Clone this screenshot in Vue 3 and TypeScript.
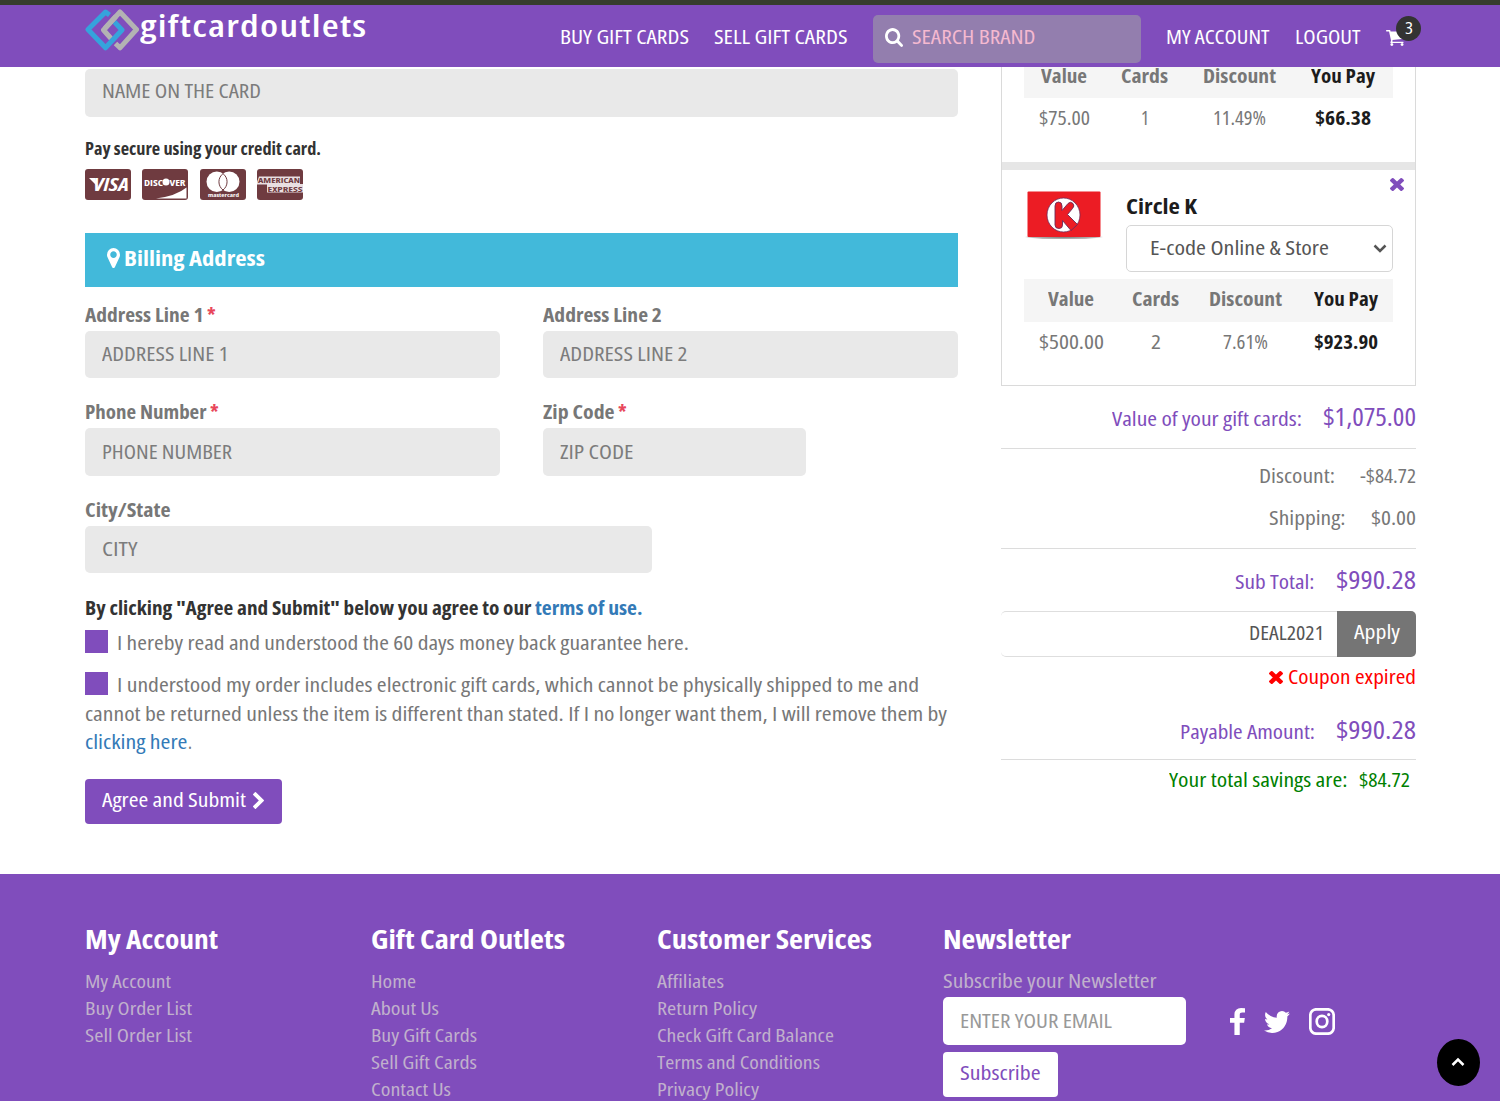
<script setup lang="ts">
import type { Directive } from 'vue'

/* Condenses a run of text horizontally to the given width in pixels. */
const vFit: Directive<HTMLElement, number> = {
  mounted(el, { value }) {
    const natural = el.getBoundingClientRect().width
    if (!natural) return
    el.style.transform = `scaleX(${value / natural})`
    el.style.marginRight = `${value - natural}px`
  },
}

type Cell = [text: string, width: number]

const icons = {
  search:
    'M1216 832q0-185-131.5-316.5t-316.5-131.5-316.5 131.5-131.5 316.5 131.5 316.5 316.5 131.5 316.5-131.5 131.5-316.5zm512 832q0 52-38 90t-90 38q-54 0-90-38l-343-342q-179 124-399 124-143 0-273.5-55.5t-225-150-150-225-55.5-273.5 55.5-273.5 150-225 225-150 273.5-55.5 273.5 55.5 225 150 150 225 55.5 273.5q0 220-124 399l343 343q37 37 37 90z',
  cart: 'M704 1536q0 52-38 90t-90 38-90-38-38-90 38-90 90-38 90 38 38 90zm896 0q0 52-38 90t-90 38-90-38-38-90 38-90 90-38 90 38 38 90zm128-1088v512q0 24-16.5 42.5t-40.5 21.5l-1044 122q13 60 13 70 0 16-24 64h920q26 0 45 19t19 45-19 45-45 19h-1024q-26 0-45-19t-19-45q0-11 8-31.5t16-36 21.5-40 15.5-29.5l-177-823h-204q-26 0-45-19t-19-45 19-45 45-19h256q16 0 28.5 6.5t19.5 15.5 13 24.5 8 26 5.5 29.5 4.5 26h1201q26 0 45 19t19 45z',
  marker:
    'M1152 640q0-106-75-181t-181-75-181 75-75 181 75 181 181 75 181-75 75-181zm256 0q0 109-33 179l-364 774q-16 33-47.5 52t-67.5 19-67.5-19-46.5-52l-365-774q-33-70-33-179 0-212 150-362t362-150 362 150 150 362z',
  times:
    'M1490 1322q0 40-28 68l-136 136q-28 28-68 28t-68-28l-294-294-294 294q-28 28-68 28t-68-28l-136-136q-28-28-28-68t28-68l294-294-294-294q-28-28-28-68t28-68l136-136q28-28 68-28t68 28l294 294 294-294q28-28 68-28t68 28l136 136q28 28 28 68t-28 68l-294 294 294 294q28 28 28 68z',
  chevron:
    'M1363 877l-742 742q-19 19-45 19t-45-19l-166-166q-19-19-19-45t19-45l531-531-531-531q-19-19-19-45t19-45l166-166q19-19 45-19t45 19l742 742q19 19 19 45t-19 45z',
  facebook:
    'M1343 12v264h-157q-86 0-116 36t-30 108v189h293l-39 296h-254v759h-306v-759h-255v-296h255v-218q0-186 104-288.5t277-102.5q147 0 228 12z',
  twitter:
    'M1684 408q-67 98-162 167 1 14 1 42 0 130-38 259.5t-115.5 248.5-184.5 210.5-258 146-323 54.5q-271 0-496-145 35 4 78 4 225 0 401-138-105-2-188-64.5t-114-159.5q33 5 61 5 43 0 85-11-112-23-185.5-111.5t-73.5-205.5v-4q68 38 146 41-66-44-105-115t-39-154q0-88 44-163 121 149 294.5 238.5t371.5 99.5q-8-38-8-74 0-134 94.5-228.5t228.5-94.5q140 0 236 102 109-21 205-78-37 115-142 178 93-10 186-50z',
}

const firstHead: Cell[] = [['Value', 46], ['Cards', 47], ['Discount', 73], ['You Pay', 64]]
const firstRow: Cell[] = [['$75.00', 51], ['1', 8], ['11.49%', 53], ['$66.38', 56]]
const secondRow: Cell[] = [['$500.00', 65], ['2', 10], ['7.61%', 45], ['$923.90', 64]]

const footerColumns: { title: Cell; links: Cell[] }[] = [
  {
    title: ['My Account', 133],
    links: [['My Account', 86], ['Buy Order List', 107], ['Sell Order List', 107]],
  },
  {
    title: ['Gift Card Outlets', 194],
    links: [['Home', 45], ['About Us', 68], ['Buy Gift Cards', 106], ['Sell Gift Cards', 106], ['Contact Us', 80]],
  },
  {
    title: ['Customer Services', 215],
    links: [
      ['Affiliates', 67],
      ['Return Policy', 100],
      ['Check Gift Card Balance', 177],
      ['Terms and Conditions', 163],
      ['Privacy Policy', 102],
    ],
  },
]
</script>

<template>
  <div class="page">
    <header class="header">
      <svg class="logo" viewBox="0 0 54 42">
        <g fill="none" stroke-width="5" stroke-linejoin="round">
          <path d="M26 29.5 L18.500 21 L35 3 L51.500 20.500 L35 38.800 L30.500 34.500" stroke="#b3b3b3" />
          <path d="M24.500 6 L20.500 3 L3 20.500 L20.500 38.800 L37 21 L29.500 13" stroke="#35a3dc" />
          <path d="M20 19.300 L31 7.300" stroke="#b3b3b3" />
        </g>
      </svg>
      <span class="t brand" v-fit="227.500">giftcardoutlets</span>
      <nav class="nav">
        <span class="t" v-fit="129">BUY GIFT CARDS</span>
        <span class="t" v-fit="133.5">SELL GIFT CARDS</span>
      </nav>
      <div class="search">
        <svg viewBox="64 128 1664 1664" preserveAspectRatio="none"><path :d="icons.search" /></svg>
        <span class="t" v-fit="123.5">SEARCH BRAND</span>
      </div>
      <nav class="nav account">
        <span class="t" v-fit="103.5">MY ACCOUNT</span>
        <span class="t" v-fit="65.5">LOGOUT</span>
      </nav>
      <div class="cart">
        <svg viewBox="64 256 1664 1408" preserveAspectRatio="none"><path :d="icons.cart" /></svg>
        <span class="badge"><span class="t" v-fit="8">3</span></span>
      </div>
    </header>

    <main class="main">
      <section class="form">
        <div class="input"><span class="t" v-fit="159">NAME ON THE CARD</span></div>
        <div class="secure"><span class="t" v-fit="236">Pay secure using your credit card.</span></div>
        <div class="cards">
          <svg viewBox="0 0 46 31">
            <rect width="46" height="31" rx="3" fill="#6f3b40" />
            <text x="8" y="21.5" textLength="36" lengthAdjust="spacingAndGlyphs" class="visa">VISA</text>
            <path d="M4 9h6l3 9z" fill="#fff" />
          </svg>
          <svg viewBox="0 0 46 31">
            <rect width="46" height="31" rx="3" fill="#6f3b40" />
            <path d="M14 29.5 Q34 27 44.5 18.5V29.5z" fill="#fff" />
            <text x="2" y="16.5" textLength="19" lengthAdjust="spacingAndGlyphs" class="disc">DISC</text>
            <circle cx="24" cy="13" r="3.5" fill="#fff" />
            <text x="27.5" y="16.5" textLength="16" lengthAdjust="spacingAndGlyphs" class="disc">VER</text>
          </svg>
          <svg viewBox="0 0 46 31">
            <rect width="46" height="31" rx="3" fill="#6f3b40" />
            <ellipse cx="16.8" cy="12.8" rx="10.3" ry="10.3" fill="#fff" />
            <ellipse cx="29.2" cy="12.8" rx="10.3" ry="10.3" fill="#fff" />
            <path
              d="M23 4.6 A10.3 10.3 0 0 1 23 21 A10.3 10.3 0 0 1 23 4.6z"
              fill="#fff"
              stroke="#6f3b40"
              stroke-width="1"
            />
            <text x="8" y="28" textLength="31" lengthAdjust="spacingAndGlyphs" class="mc">mastercard</text>
          </svg>
          <svg viewBox="0 0 46 31">
            <rect width="46" height="31" rx="3" fill="#6f3b40" />
            <path d="M2 7.5H43V15H46V23.5H10V15.5H0V13z" fill="#e9dfe2" />
            <text x="1" y="14" textLength="42" lengthAdjust="spacingAndGlyphs" class="amex">AMERICAN</text>
            <text x="10.5" y="22.6" textLength="35" lengthAdjust="spacingAndGlyphs" class="amex">EXPRESS</text>
          </svg>
        </div>
        <h2 class="billing">
          <svg viewBox="384 128 1024 1536" preserveAspectRatio="none"><path :d="icons.marker" /></svg>
          <span class="t" v-fit="141">Billing Address</span>
        </h2>

        <div class="fields">
          <div class="field">
            <label><span class="t" v-fit="118.500">Address Line 1</span><i>*</i></label>
            <div class="input"><span class="t" v-fit="126.500">ADDRESS LINE 1</span></div>
          </div>
          <div class="field">
            <label><span class="t" v-fit="119">Address Line 2</span></label>
            <div class="input"><span class="t" v-fit="127.500">ADDRESS LINE 2</span></div>
          </div>
          <div class="field">
            <label><span class="t" v-fit="121.500">Phone Number</span><i>*</i></label>
            <div class="input"><span class="t" v-fit="130">PHONE NUMBER</span></div>
          </div>
          <div class="field">
            <label><span class="t" v-fit="71.500">Zip Code</span><i>*</i></label>
            <div class="input zip"><span class="t" v-fit="73.500">ZIP CODE</span></div>
          </div>
          <div class="field">
            <label><span class="t" v-fit="85.500">City/State</span></label>
            <div class="input city"><span class="t" v-fit="35.500">CITY</span></div>
          </div>
        </div>

        <div class="agree">
          <span class="t" v-fit="446.500">By clicking "Agree and Submit" below you agree to our</span>
          <a class="t" v-fit="107.500">terms of use.</a>
        </div>
        <div class="check">
          <b class="box"></b>
          <span class="t" v-fit="572">I hereby read and understood the 60 days money back guarantee here.</span>
        </div>
        <div class="check second">
          <b class="box"></b>
          <span class="t" v-fit="802">I understood my order includes electronic gift cards, which cannot be physically shipped to me and</span>
        </div>
        <div class="line">
          <span class="t" v-fit="862">cannot be returned unless the item is different than stated. If I no longer want them, I will remove them by</span>
        </div>
        <div class="line"><a class="t" v-fit="102.500">clicking here</a><span class="t" v-fit="4">.</span></div>
        <button class="submit">
          <span class="t" v-fit="144">Agree and Submit</span>
          <svg viewBox="346 26 1036 1612" preserveAspectRatio="none"><path :d="icons.chevron" /></svg>
        </button>
      </section>

      <aside class="order">
        <div class="items">
          <div class="item first">
            <div class="row head one">
              <div v-for="[text, w] in firstHead" :key="text"><span class="t" v-fit="w">{{ text }}</span></div>
            </div>
            <div class="row one">
              <div v-for="[text, w] in firstRow" :key="text"><span class="t" v-fit="w">{{ text }}</span></div>
            </div>
          </div>
          <div class="item">
            <svg class="remove" viewBox="302 366 1188 1188" preserveAspectRatio="none"><path :d="icons.times" /></svg>
            <div class="product">
              <svg class="thumb" viewBox="0 0 80 54">
                <defs>
                  <radialGradient id="shade">
                    <stop offset="0" stop-color="#777" />
                    <stop offset=".8" stop-color="#bbb" />
                    <stop offset="1" stop-color="#fff" />
                  </radialGradient>
                </defs>
                <ellipse cx="40" cy="46" rx="40" ry="2.500" fill="url(#shade)" />
                <rect x="3.5" y=".5" width="73" height="45.5" rx="1" fill="#ec1c24" />
                <ellipse cx="39.5" cy="24" rx="16.5" ry="17" fill="#fff" stroke="#6b2a58" stroke-width=".8" />
                <path d="M44 42L49 37L56 34V45H46z" fill="#ec1c24" />
                <path
                  d="M31 15 Q31 11 34.5 11 Q38 11 38 15 V19.500 L44 12.500 Q46.500 10 49 12.500 Q51 15 48.500 17.500 L43.500 23.500 L53.500 33.500 L47 39.500 L38.500 29.500 V34 Q38.500 37.500 35 37.500 Q31 37.500 31 34z"
                  fill="#ec1c24"
                  stroke="#6b2a58"
                  stroke-width=".9"
                />
              </svg>
              <div class="details">
                <h3><span class="t" v-fit="71">Circle K</span></h3>
                <div class="select">
                  <span class="t" v-fit="179">E-code Online &amp; Store</span>
                  <svg viewBox="0 0 14 9"><path d="M1.500 1.500L7 7L12.500 1.500" /></svg>
                </div>
              </div>
            </div>
            <div class="row head two">
              <div v-for="[text, w] in firstHead" :key="text"><span class="t" v-fit="w">{{ text }}</span></div>
            </div>
            <div class="row two">
              <div v-for="[text, w] in secondRow" :key="text"><span class="t" v-fit="w">{{ text }}</span></div>
            </div>
          </div>
        </div>

        <div class="total value">
          <span class="t" v-fit="190">Value of your gift cards:</span><span class="t big" v-fit="93">$1,075.00</span>
        </div>
        <div class="extras">
          <div class="extra"><span class="t" v-fit="76">Discount:</span><span class="t" v-fit="56">-$84.72</span></div>
          <div class="extra"><span class="t" v-fit="76.500">Shipping:</span><span class="t" v-fit="45">$0.00</span></div>
        </div>
        <div class="total">
          <span class="t" v-fit="79.500">Sub Total:</span><span class="t big" v-fit="80">$990.28</span>
        </div>
        <div class="coupon">
          <div class="code"><span class="t" v-fit="75">DEAL2021</span></div>
          <button><span class="t" v-fit="46">Apply</span></button>
        </div>
        <div class="expired">
          <svg viewBox="302 366 1188 1188" preserveAspectRatio="none"><path :d="icons.times" /></svg>
          <span class="t" v-fit="128">Coupon expired</span>
        </div>
        <div class="total payable">
          <span class="t" v-fit="135">Payable Amount:</span><span class="t big" v-fit="80">$990.28</span>
        </div>
        <div class="savings">
          <span class="t" v-fit="178.500">Your total savings are:</span><span class="t" v-fit="51">$84.72</span>
        </div>
      </aside>
    </main>

    <footer class="footer">
      <div v-for="col in footerColumns" :key="col.title[0]" class="column">
        <h4><span class="t" v-fit="col.title[1]">{{ col.title[0] }}</span></h4>
        <div v-for="[text, w] in col.links" :key="text" class="link"><a class="t" v-fit="w">{{ text }}</a></div>
      </div>
      <div class="column news">
        <h4><span class="t" v-fit="128">Newsletter</span></h4>
        <div class="lead"><span class="t" v-fit="213.500">Subscribe your Newsletter</span></div>
        <div class="signup">
          <div>
            <div class="email"><span class="t" v-fit="152">ENTER YOUR EMAIL</span></div>
            <button class="subscribe"><span class="t" v-fit="80.500">Subscribe</span></button>
          </div>
          <div class="social">
            <svg class="fb" viewBox="479 0 864 1664" preserveAspectRatio="none"><path :d="icons.facebook" /></svg>
            <svg class="tw" viewBox="108 256 1576 1280" preserveAspectRatio="none"><path :d="icons.twitter" /></svg>
            <svg class="ig" viewBox="0 0 26 27">
              <rect x="1.300" y="1.300" width="23.400" height="24.400" rx="6" />
              <ellipse cx="13" cy="13.500" rx="5.300" ry="5.600" />
              <circle cx="19.700" cy="6.600" r="1.600" class="dot" />
            </svg>
          </div>
        </div>
      </div>
      <button class="to-top">
        <svg viewBox="0 0 14 10"><path d="M1.500 8L7 2.500L12.500 8" /></svg>
      </button>
    </footer>
  </div>
</template>

<style>
body {
  margin: 0;
  overflow: hidden;
}
</style>

<style scoped>
* {
  box-sizing: border-box;
}
.page {
  width: 1500px;
  height: 1101px;
  overflow: hidden;
  display: flex;
  flex-direction: column;
  background: #fff;
  color: #777;
  font: 400 19.5px 'Open Sans', 'Noto Sans', sans-serif;
  font-stretch: 75%;
}
.t {
  display: inline-block;
  flex: none;
  white-space: pre;
  transform-origin: 0 50%;
}
svg {
  display: block;
  flex: none;
  fill: currentColor;
}
button {
  border: 0;
  font: inherit;
  font-stretch: 75%;
}
h2, h3, h4 {
  margin: 0;
}
a {
  color: #337ab7;
}

.header {
  flex: none;
  height: 67px;
  display: flex;
  align-items: flex-start;
  padding-left: 85px;
  border-top: 5px solid #373d2d;
  background: #804dbc;
  color: #fff;
  line-height: 20px;
}
.logo {
  width: 54px;
  height: 42px;
  margin-top: 4px;
}
.brand {
  margin-left: 1px;
  font-size: 31px;
  font-weight: 600;
  letter-spacing: 1px;
  line-height: 40px;
}
.nav {
  display: flex;
  gap: 25px;
  margin: 22px 0 0 192.500px;
  font-weight: 500;
}
.search {
  width: 267.500px;
  height: 48px;
  margin: 10px 0 0 25.500px;
  display: flex;
  align-items: center;
  gap: 9px;
  padding: 0 0 3px 12px;
  border-radius: 5px;
  background: #937eae;
  color: #f5b9d0;
  font-weight: 500;
}
.search .t {
  position: relative;
  top: -0.500px;
}
.search svg {
  width: 18px;
  height: 19px;
  color: #fff;
}
.nav.account {
  margin-left: 25.500px;
}
.cart {
  position: relative;
  margin: 25px 0 0 26px;
}
.cart svg {
  width: 19px;
  height: 16px;
}
.badge {
  position: absolute;
  left: 10px;
  top: -14px;
  width: 25px;
  height: 25px;
  display: flex;
  align-items: center;
  justify-content: center;
  padding-bottom: 2px;
  border-radius: 50%;
  background: #333;
  font-size: 16px;
}

.main {
  flex: none;
  height: 807px;
  display: flex;
  align-items: flex-start;
  padding-left: 85px;
}
.form {
  width: 873px;
  padding-top: 2px;
}
.input {
  height: 47.500px;
  display: flex;
  align-items: center;
  padding-left: 17px;
  border-radius: 5px;
  background: #e9e9e9;
  color: #7c7c7c;
  line-height: 20px;
}
.form > .input {
  padding-bottom: 3px;
}
.secure {
  height: 52.500px;
  padding-top: 22px;
  color: #333;
  font-size: 17px;
  font-weight: 700;
  line-height: 20px;
}
.cards {
  display: flex;
  gap: 11.300px;
}
.cards svg {
  width: 46px;
  height: 31px;
  overflow: visible;
}
.cards text {
  fill: #fff;
  font-weight: 700;
}
.visa {
  font-size: 18px;
  font-style: italic;
}
.disc {
  font-size: 9px;
}
.mc {
  font-size: 5px;
}
.cards .amex {
  fill: #6f3b40;
  font-size: 7.500px;
}
.billing {
  height: 54px;
  margin-top: 33px;
  display: flex;
  align-items: center;
  gap: 5px;
  padding: 0 0 5px 22px;
  background: #42b9da;
  color: #fff;
  font-size: 22px;
  font-weight: 700;
}
.billing .t {
  position: relative;
  top: -1px;
}
.billing svg {
  width: 13px;
  height: 20px;
  margin-right: -1px;
}
.fields {
  display: grid;
  grid-template-columns: 415px 415px;
  gap: 20px 43px;
  margin-top: 13.500px;
}
.field label {
  height: 30px;
  display: flex;
  padding-top: 4px;
  font-weight: 700;
  line-height: 20px;
}
.field label i {
  margin-left: 3.500px;
  color: #e8475b;
  font-style: normal;
}
.zip {
  width: 262.500px;
}
.city {
  width: 567px;
}
.agree {
  display: flex;
  gap: 3.500px;
  margin-top: 24.500px;
  color: #333;
  font-weight: 700;
  line-height: 20px;
}
.check {
  height: 23px;
  display: flex;
  align-items: center;
  gap: 8.500px;
  margin-top: 12px;
}
.check .t {
  position: relative;
  top: 1px;
}
.box {
  width: 23px;
  height: 23px;
  background: #804dbc;
}
.second {
  margin-top: 19.500px;
}
.line {
  height: 28px;
  line-height: 28px;
}
.second + .line {
  margin-top: 5px;
}
.submit {
  width: 197px;
  height: 45px;
  display: flex;
  align-items: center;
  gap: 7px;
  margin-top: 23px;
  padding: 0 0 3px 17px;
  border-radius: 4px;
  background: #804dbc;
  color: #fff;
  font-weight: 500;
}
.submit .t {
  position: relative;
  top: -0.500px;
}
.submit svg {
  width: 11px;
  height: 17px;
}

.order {
  width: 414.500px;
  margin-left: 43px;
}
.items {
  border: 1px solid #dadada;
  border-top: 0;
  height: 319px;
}
.item {
  position: relative;
  padding: 21px 22px 0;
}
.item.first {
  height: 103px;
  padding-top: 0;
  border-bottom: 8px solid #e6e6e6;
}
.row {
  display: grid;
  height: 42px;
  line-height: 20px;
  text-align: center;
  padding-top: 10px;
}
.head {
  height: 42.500px;
  background: #f5f5f5;
  font-weight: 700;
}
.first .head {
  height: 30.500px;
  padding-top: 0;
  line-height: 17px;
}
.row > :last-child {
  color: #1c1c1c;
  font-weight: 700;
}
.one {
  grid-template-columns: 80px 81px 108px 100px;
}
.two {
  grid-template-columns: 94px 75px 105px 95px;
}
.remove {
  position: absolute;
  top: 8px;
  right: 11px;
  width: 14px;
  height: 13px;
  color: #804dbc;
}
.product {
  display: flex;
  height: 88px;
}
.thumb {
  width: 80px;
  height: 54px;
}
.details {
  margin-left: 22px;
}
h3 {
  height: 33.500px;
  padding-top: 3px;
  color: #1c1c1c;
  font-size: 22px;
  font-weight: 700;
  line-height: 22px;
}
.select {
  width: 267px;
  height: 47.500px;
  display: flex;
  align-items: center;
  justify-content: space-between;
  padding: 0 5px 1.500px 23px;
  border: 1px solid #d6d6d6;
  border-radius: 5px;
  color: #555;
}
.select svg {
  width: 14px;
  height: 9px;
  position: relative;
  top: 1px;
}
.select path,
.to-top path {
  fill: none;
  stroke: currentColor;
  stroke-width: 2.500;
}
.total {
  display: flex;
  align-items: baseline;
  justify-content: flex-end;
  gap: 21px;
  height: 62px;
  padding-top: 10px;
  color: #804dbc;
  line-height: 40px;
}
.big {
  font-size: 25.500px;
}
.total.value {
  height: 62.500px;
  padding-top: 10px;
  border-bottom: 1.500px solid #dcdcdc;
}
.extras {
  height: 100px;
  padding-top: 6px;
  border-bottom: 1.500px solid #dcdcdc;
}
.extra {
  display: flex;
  justify-content: flex-end;
  gap: 25px;
  height: 42.500px;
  line-height: 42px;
}
.coupon {
  display: flex;
  height: 46px;
}
.code {
  flex: 1;
  display: flex;
  align-items: center;
  justify-content: flex-end;
  padding: 0 13px 2px 0;
  border: solid #dedede;
  border-width: 1px 0;
  border-radius: 5px 0 0 5px;
  color: #555;
}
.coupon button {
  width: 79px;
  padding: 0 0 4px 17px;
  border-radius: 0 5px 5px 0;
  background: #757575;
  color: #fff;
  font-weight: 500;
  text-align: left;
}
.expired {
  display: flex;
  align-items: center;
  justify-content: flex-end;
  gap: 5px;
  height: 41px;
  color: #f00;
}
.expired .t {
  position: relative;
  top: -0.500px;
}
.expired svg {
  width: 14px;
  height: 13px;
}
.total.payable {
  padding-top: 11.500px;
  border-bottom: 1.500px solid #dcdcdc;
}
.savings {
  display: flex;
  justify-content: flex-end;
  gap: 11px;
  padding-right: 6px;
  color: #008000;
  line-height: 40px;
}

.footer {
  position: relative;
  flex: 1;
  display: flex;
  padding: 50px 0 0 85px;
  background: #804dbc;
  color: #c0b1cc;
}
.column {
  width: 286px;
}
h4 {
  height: 44px;
  color: #fff;
  font-size: 27px;
  font-weight: 700;
  line-height: 29px;
}
.link {
  height: 27px;
  font-size: 18.500px;
  line-height: 26px;
}
.link a {
  color: inherit;
}
.column.news {
  width: 500px;
}
.lead {
  height: 29px;
  line-height: 25px;
}
.signup {
  display: flex;
  gap: 44px;
}
.email {
  width: 243px;
  height: 48px;
  padding-left: 17px;
  border-radius: 5px;
  background: #fff;
  color: #999;
  line-height: 48px;
}
.subscribe {
  width: 114.500px;
  height: 45px;
  display: flex;
  align-items: center;
  margin-top: 7px;
  padding: 0 0 4px 17px;
  border-radius: 4px;
  background: #fff;
  color: #804dbc;
}
.social {
  display: flex;
  align-items: center;
  height: 49px;
  color: #fff;
}
.fb {
  width: 15px;
  height: 27px;
}
.tw {
  width: 26px;
  height: 22px;
  margin: 0 19px 0 19px;
}
.ig {
  width: 26px;
  height: 27px;
  fill: none;
  stroke: currentColor;
  stroke-width: 2.700;
}
.ig .dot {
  fill: currentColor;
  stroke: none;
}
.to-top {
  position: absolute;
  left: 1436.500px;
  top: 165px;
  width: 43px;
  height: 47px;
  display: flex;
  align-items: center;
  justify-content: center;
  padding: 0;
  border-radius: 50%;
  background: #000;
  color: #fff;
}
.to-top svg {
  width: 14px;
  height: 10px;
  margin-bottom: 2px;
}
</style>
